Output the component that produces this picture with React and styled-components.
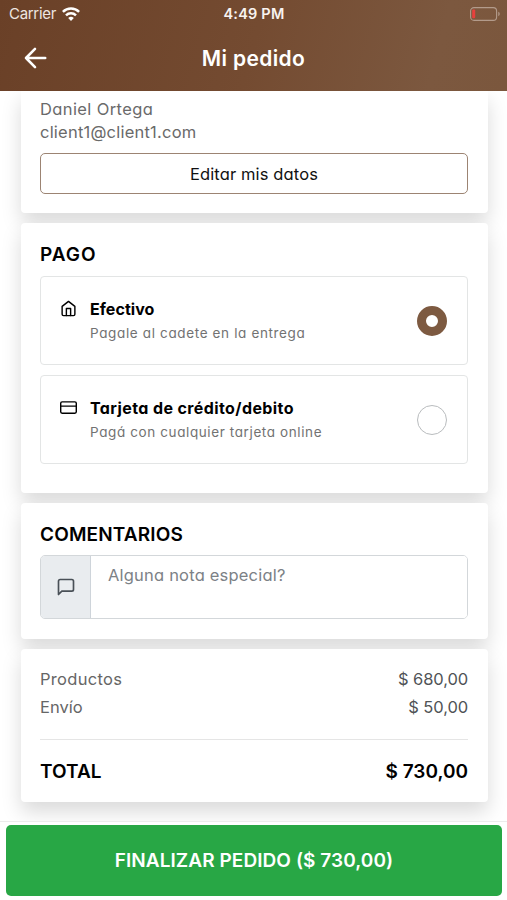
import React, { useState } from 'react';
import styled, { createGlobalStyle } from 'styled-components';

const GlobalStyle = createGlobalStyle`
  * {
    box-sizing: border-box;
  }
  body {
    margin: 0;
    background-color: #fff;
    font-family: Inter, 'Open Sans', sans-serif;
    color: #000;
  }
`;

const Container = styled.div`
  display: flex;
  flex-direction: column;
  width: 507px;
  height: 900px;
  overflow: hidden;
  font-feature-settings: 'cv11';
`;

const Header = styled.header`
  flex: none;
  height: 91px;
  color: #fff;
  background: linear-gradient(105deg, #6a4027 0%, #744b31 50%, #7c583f 85%, #7b573d 100%);
  position: relative;
  z-index: 2;
`;

const StatusBar = styled.div`
  display: grid;
  grid-template-columns: 1fr auto 1fr;
  align-items: center;
  height: 27px;
  padding: 0 6px 0 9px;
  font-size: 15px;
  font-feature-settings: normal;
`;

const Carrier = styled.div`
  display: flex;
  align-items: center;
  gap: 6px;
  color: #eee6e1;
  letter-spacing: -0.3px;
`;

const Clock = styled.div`
  margin-left: -2px;
  font-weight: 600;
  font-size: 14.5px;
  letter-spacing: 0.2px;
  color: #f8f3f0;
`;

const Battery = styled.svg`
  justify-self: end;
`;

const NavBar = styled.div`
  display: grid;
  grid-template-columns: 60px 1fr 60px;
  align-items: center;
  height: 62px;
`;

const BackButton = styled.button`
  display: flex;
  justify-content: flex-end;
  padding: 0 13px 0 0;
  border: 0;
  background: none;
  color: #fff;
`;

const PageTitle = styled.h1`
  margin: 0;
  text-align: center;
  font-size: 21px;
  font-weight: 600;
  letter-spacing: ${({ $track }) => $track || 0}px;
`;

const Content = styled.main`
  flex: 1;
  min-height: 0;
  display: flex;
  flex-direction: column;
  gap: 10px;
  padding: 0 19px 0 21px;
  overflow: hidden;
`;

const Card = styled.section`
  flex: none;
  height: ${({ $height }) => $height}px;
  padding: ${({ $top }) => $top}px 20px 0 19px;
  border-radius: ${({ $cut }) => ($cut ? '0 0 4px 4px' : '4px')};
  background-color: #fff;
  box-shadow: 0 10px 20px rgba(0, 0, 0, 0.15);
`;

const Line = styled.div`
  height: 23px;
  line-height: 23px;
  font-size: 16.5px;
  color: #6a6a6a;
  letter-spacing: ${({ $track }) => $track || 0}px;
`;

const EditButton = styled.button`
  display: block;
  width: 100%;
  height: 41px;
  margin-top: 9px;
  padding: 0;
  border: 1.5px solid #9c8473;
  border-radius: 5px;
  background-color: #fff;
  color: #111;
  font-family: inherit;
  font-feature-settings: inherit;
  font-size: 16.5px;
  letter-spacing: ${({ $track }) => $track || 0}px;
`;

const Heading = styled.h2`
  margin: 0;
  height: 28px;
  line-height: 30px;
  font-size: 19px;
  font-weight: 600;
  letter-spacing: ${({ $track }) => $track || 0}px;
`;

const Options = styled.div`
  display: flex;
  flex-direction: column;
  gap: 10px;
  margin-top: 8px;
`;

const Option = styled.div`
  display: grid;
  grid-template-columns: 49px 1fr 30px;
  height: 89px;
  padding: 0 20px 0 0;
  border: 1.5px solid #e3e5e5;
  border-radius: 4px;
  cursor: pointer;
`;

const OptionIcon = styled.div`
  display: flex;
  justify-content: center;
  padding-top: 23px;
  padding-left: 6px;
`;

const OptionTitle = styled.div`
  margin-top: 20px;
  height: 24px;
  line-height: 24px;
  font-size: 16px;
  font-weight: 700;
  white-space: nowrap;
  letter-spacing: ${({ $track }) => $track || 0}px;
`;

const OptionText = styled.div`
  height: 24px;
  line-height: 24px;
  font-size: 13.5px;
  color: #727272;
  white-space: nowrap;
  letter-spacing: ${({ $track }) => $track || 0}px;
`;

const Radio = styled.span`
  align-self: center;
  width: 30px;
  height: 30px;
  border-radius: 50%;
  border: ${({ $checked }) => ($checked ? '9px solid #7d5a41' : '1.5px solid #b9bcbe')};
  background-color: #fff;
`;

const InputGroup = styled.div`
  display: flex;
  height: 64px;
  margin-top: 7px;
  border: 1.5px solid #d3d7da;
  border-radius: 5px;
  overflow: hidden;
`;

const Addon = styled.div`
  display: flex;
  align-items: center;
  justify-content: center;
  width: 50px;
  border-right: 1px solid #ced4da;
  background-color: #e9ecef;
  color: #495057;
`;

const Note = styled.textarea`
  flex: 1;
  padding: 8px 17px;
  border: 0;
  outline: 0;
  resize: none;
  font-family: inherit;
  font-feature-settings: inherit;
  font-size: 16.5px;
  line-height: 23px;
  letter-spacing: ${({ $track }) => $track || 0}px;

  &::placeholder {
    color: #7c8186;
    opacity: 1;
  }
`;

const Row = styled.div`
  display: flex;
  justify-content: space-between;
  height: 28px;
  line-height: 28px;
  font-size: 16.5px;
  color: #666;
`;

const Label = styled.span`
  letter-spacing: ${({ $track }) => $track || 0}px;
`;

const Amount = styled.span`
  color: #505356;
  letter-spacing: ${({ $track }) => $track || 0}px;
`;

const Hr = styled.hr`
  margin: 18px 0 17px;
  border: 0;
  border-top: 1px solid #e5e5e5;
`;

const TotalRow = styled(Row)`
  line-height: 30px;
  font-size: 19px;
  font-weight: 600;
  color: #000;

  ${Amount} {
    color: #000;
  }
`;

const Footer = styled.footer`
  flex: none;
  height: 79px;
  padding: 3px 5px 0 6px;
  border-top: 1px solid #ececec;
  background-color: #fff;
  position: relative;
  z-index: 1;
`;

const SubmitButton = styled.button`
  width: 100%;
  height: 71px;
  padding: 0;
  border: 0;
  border-radius: 5px;
  background-color: #28a745;
  color: #fff;
  font-family: inherit;
  font-size: 19px;
  font-weight: 600;
  letter-spacing: ${({ $track }) => $track || 0}px;
`;

const Icon = ({ size, width = 2, children }) => (
  <svg
    width={size}
    height={size}
    viewBox='0 0 24 24'
    fill='none'
    stroke='currentColor'
    strokeWidth={width}
    strokeLinecap='round'
    strokeLinejoin='round'
  >
    {children}
  </svg>
);

const HomeIcon = () => (
  <Icon size={17}>
    <path d='M3 9l9-7 9 7v11a2 2 0 0 1-2 2H5a2 2 0 0 1-2-2z' />
    <path d='M9 22V12h6v10' />
  </Icon>
);

const CardIcon = () => (
  <Icon size={17}>
    <rect x='1' y='4' width='22' height='16' rx='2' />
    <path d='M1 10h22' />
  </Icon>
);

const MessageIcon = () => (
  <Icon size={20}>
    <path d='M21 15a2 2 0 0 1-2 2H7l-4 4V5a2 2 0 0 1 2-2h14a2 2 0 0 1 2 2z' />
  </Icon>
);

const payments = [
  {
    id: 'cash',
    icon: <HomeIcon />,
    title: 'Efectivo',
    titleTrack: 0.05,
    text: 'Pagale al cadete en la entrega',
    textTrack: 0.64,
  },
  {
    id: 'card',
    icon: <CardIcon />,
    title: 'Tarjeta de crédito/debito',
    titleTrack: 0.4,
    text: 'Pagá con cualquier tarjeta online',
    textTrack: 0.61,
  },
];

const App = () => {
  const [payment, setPayment] = useState('cash');

  return (
    <>
      <GlobalStyle />
      <Container>
        <Header>
          <StatusBar>
            <Carrier>
              Carrier
              <svg width='18' height='14' viewBox='0 0 18 14' fill='none' stroke='#fff' strokeWidth='2.5'>
                <path d='M0.9 4.9a11.6 11.6 0 0 1 16.2 0' />
                <path d='M4 8.3a7.2 7.2 0 0 1 10 0' />
                <path d='M9 14L6.2 11.1a4 4 0 0 1 5.6 0z' fill='#fff' stroke='none' />
              </svg>
            </Carrier>
            <Clock>4:49 PM</Clock>
            <Battery width='31' height='14' viewBox='0 0 31 14'>
              <rect x='0.6' y='0.6' width='26' height='12.8' rx='3.4' fill='none' stroke='#b39b8b' strokeWidth='1.1' />
              <rect x='2.2' y='2.6' width='3' height='8.6' rx='1' fill='#e8403c' />
              <path d='M28.3 4.8v4.4a2.4 2.4 0 0 0 0-4.4z' fill='#b39b8b' />
            </Battery>
          </StatusBar>
          <NavBar>
            <BackButton aria-label='Volver'>
              <svg width='23' height='22' viewBox='0 0 23 22' fill='none' stroke='currentColor' strokeWidth='2.6'>
                <path d='M11 1.9L2 11l9 9.1M2 11h19.2' strokeLinecap='round' strokeLinejoin='round' />
              </svg>
            </BackButton>
            <PageTitle $track={0.35}>Mi pedido</PageTitle>
          </NavBar>
        </Header>

        <Content>
          <Card $height={122} $top={7} $cut>
            <Line $track={0.38}>Daniel Ortega</Line>
            <Line $track={0.22}>client1@client1.com</Line>
            <EditButton $track={0.13}>Editar mis datos</EditButton>
          </Card>

          <Card $height={270} $top={17}>
            <Heading $track={1}>PAGO</Heading>
            <Options>
              {payments.map((p) => (
                <Option key={p.id} onClick={() => setPayment(p.id)}>
                  <OptionIcon>{p.icon}</OptionIcon>
                  <div>
                    <OptionTitle $track={p.titleTrack}>{p.title}</OptionTitle>
                    <OptionText $track={p.textTrack}>{p.text}</OptionText>
                  </div>
                  <Radio $checked={payment === p.id} />
                </Option>
              ))}
            </Options>
          </Card>

          <Card $height={136} $top={17}>
            <Heading $track={0.15}>COMENTARIOS</Heading>
            <InputGroup>
              <Addon>
                <MessageIcon />
              </Addon>
              <Note $track={0.2} placeholder='Alguna nota especial?' />
            </InputGroup>
          </Card>

          <Card $height={153} $top={16}>
            <Row>
              <Label $track={0.3}>Productos</Label>
              <Amount $track={-0.1}>$ 680,00</Amount>
            </Row>
            <Row>
              <Label>Envío</Label>
              <Amount $track={-0.1}>$ 50,00</Amount>
            </Row>
            <Hr />
            <TotalRow>
              <Label $track={0.05}>TOTAL</Label>
              <Amount>$ 730,00</Amount>
            </TotalRow>
          </Card>
        </Content>

        <Footer>
          <SubmitButton $track={0.07}>FINALIZAR PEDIDO ($ 730,00)</SubmitButton>
        </Footer>
      </Container>
    </>
  );
};

export default App;
